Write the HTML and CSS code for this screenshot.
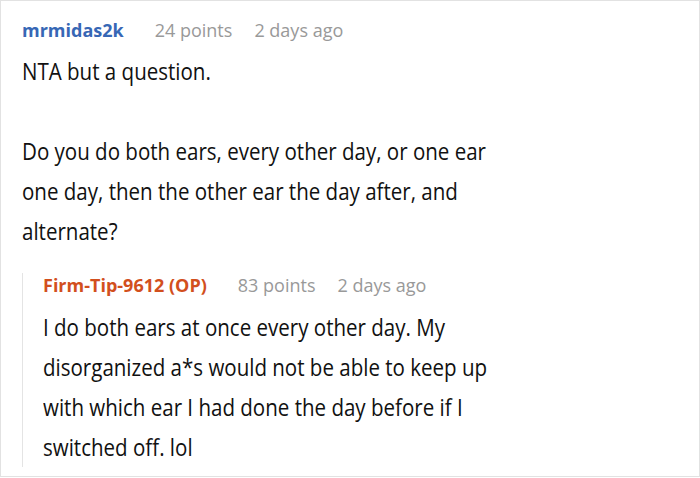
FILE: index.html
```html
<!DOCTYPE html>
<html>
<head>
<meta charset="utf-8">
<link rel="stylesheet" href="styles.css">
</head>
<body>
<div class="comment">
  <div class="meta">
    <span class="user user-blue">mrmidas2k</span>
    <span class="info">24 points</span>
    <span class="info">2 days ago</span>
  </div>
  <div class="text text-main">
    <p>NTA but a question.</p>
    <p>Do you do both ears, every other day, or one ear one day, then the other ear the day after, and alternate?</p>
  </div>
  <div class="reply">
    <div class="meta">
      <span class="user user-op">Firm-Tip-9612 (OP)</span>
      <span class="info">83 points</span>
      <span class="info">2 days ago</span>
    </div>
    <div class="text text-reply">
      <p>I do both ears at once every other day. My disorganized a*s would not be able to keep up with which ear I had done the day before if I switched off. lol</p>
    </div>
  </div>
</div>
</body>
</html>
```
FILE: styles.css
```css
* { box-sizing: border-box; }
html, body { margin: 0; padding: 0; background: #fff; }
body { font-family: "Open Sans", "Noto Sans", sans-serif; }
.comment {
  width: 700px;
  height: 477px;
  border: 1px solid #e2e2e2;
  padding: 17px 0 0 21px;
  overflow: hidden;
}
.meta {
  display: flex;
  gap: 22px;
  font-size: 18px;
  line-height: 24px;
}
.user { font-weight: 700; margin-right: 9px; }
.user-blue { color: #3767b5; }
.user-op { color: #d24f1d; }
.info { color: #999; }
.text {
  font-size: 24px;
  line-height: 40px;
  color: #111;
  transform: scaleX(0.855);
  transform-origin: left top;
}
.text p { margin: 0 0 40px; }
.text p:last-child { margin-bottom: 0; }
.text-main { margin-top: 9px; width: 576px; }
.reply {
  margin-top: 32px;
  border-left: 1px solid #e4e4e4;
  padding-left: 20px;
}
.reply .meta { margin-top: -10px; }
.text-reply { width: 569px; margin-top: 10px; margin-bottom: -10px; }
```
